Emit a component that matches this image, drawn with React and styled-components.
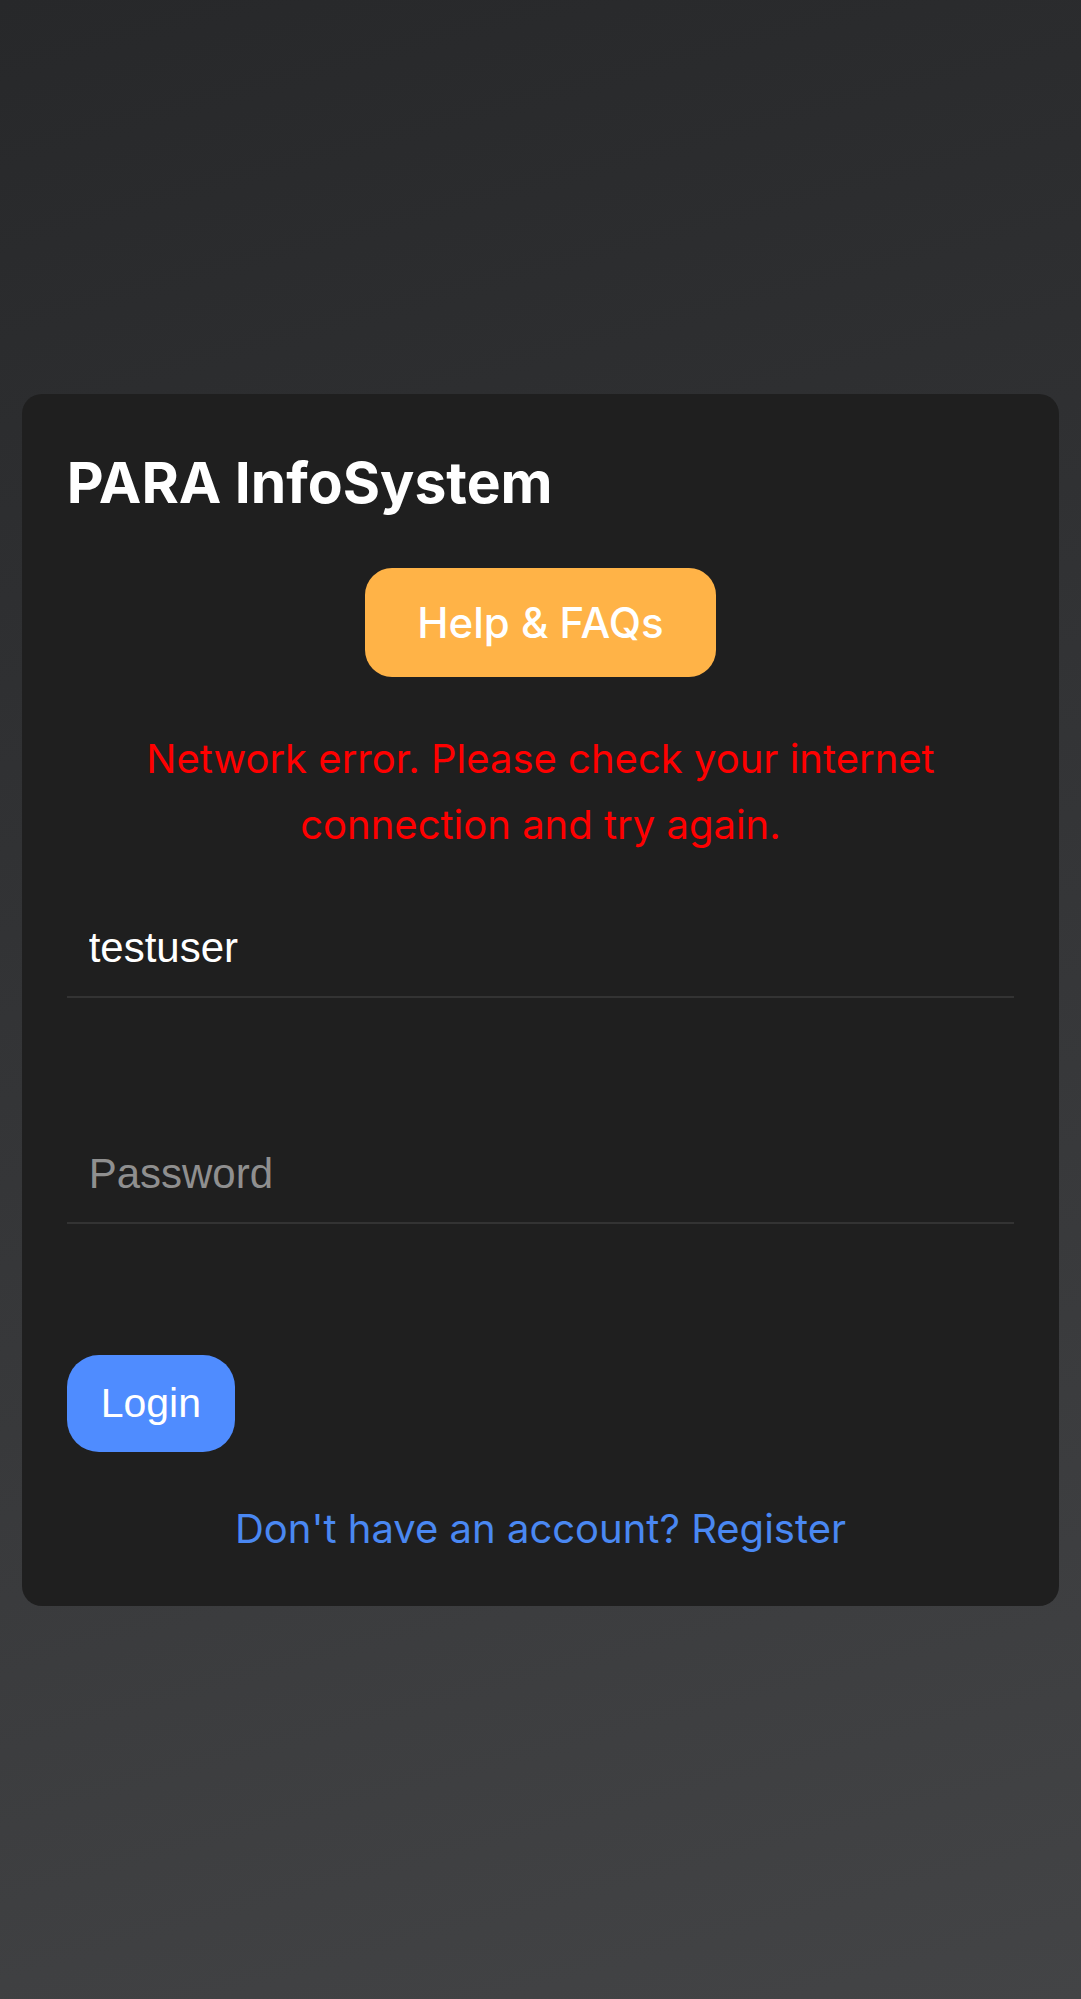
import React, { useState } from "react";
import styled, { createGlobalStyle } from "styled-components";

const GlobalStyle = createGlobalStyle`
  html, body {
    margin: 0;
    padding: 0;
  }
  body {
    min-height: 100vh;
    background: linear-gradient(165deg, #27282a 0%, #2f3032 30%, #3a3b3d 70%, #434446 100%);
    font-family: "Inter", "Liberation Sans", sans-serif;
  }
  * {
    box-sizing: border-box;
  }
`;

const Page = styled.div`
  min-height: 100vh;
  display: flex;
  align-items: center;
  justify-content: center;
`;

const Card = styled.div`
  width: 96%;
  background-color: #1f1f1f;
  border-radius: 20px;
  padding: 54px 45px 53px;
  display: flex;
  flex-direction: column;
`;

const Title = styled.h1`
  margin: 0;
  font-family: "Inter", sans-serif;
  font-weight: 700;
  font-size: 57px;
  line-height: 69px;
  color: #ffffff;
`;

const HelpButton = styled.button`
  align-self: center;
  margin-top: 51px;
  padding: 28px 52px;
  border: none;
  border-radius: 27px;
  background-color: #ffb347;
  color: #ffffff;
  font-family: "Inter", sans-serif;
  font-weight: 500;
  font-size: 42px;
  line-height: 53px;
  cursor: pointer;
`;

const ErrorText = styled.p`
  margin: 49px 0 0;
  font-family: "Inter", sans-serif;
  font-size: 40px;
  line-height: 66px;
  color: #ff0000;
  text-align: center;
`;

const Form = styled.form`
  display: flex;
  flex-direction: column;
  margin-top: 42px;
`;

const Field = styled.div`
  margin-bottom: ${(p) => p.$gap}px;
`;

const TextInput = styled.input`
  display: block;
  width: 100%;
  padding: 24px 22px;
  border: none;
  border-bottom: 2px solid #333333;
  background: transparent;
  color: #ffffff;
  font-family: "Liberation Sans", Arial, sans-serif;
  font-size: 42px;
  outline: none;

  &::placeholder {
    color: #8f8f8f;
  }
`;

const LoginButton = styled.button`
  align-self: flex-start;
  padding: 25px 34px;
  border: none;
  border-radius: 32px;
  background-color: #4f8cff;
  color: #ffffff;
  font-family: "Liberation Sans", Arial, sans-serif;
  font-size: 41px;
  cursor: pointer;
`;

const RegisterLink = styled.a`
  margin-top: 53px;
  font-family: "Inter", sans-serif;
  font-size: 40px;
  line-height: 48px;
  color: #4a88f2;
  text-align: center;
  text-decoration: none;
`;

export default function App() {
  const [username, setUsername] = useState("testuser");
  const [password, setPassword] = useState("");

  return (
    <>
      <GlobalStyle />
      <Page>
        <Card>
          <Title>PARA InfoSystem</Title>
          <HelpButton type="button">Help &amp; FAQs</HelpButton>
          <ErrorText>
            Network error. Please check your internet connection and try again.
          </ErrorText>
          <Form onSubmit={(e) => e.preventDefault()}>
            <Field $gap={128}>
              <TextInput
                type="text"
                placeholder="Username"
                value={username}
                onChange={(e) => setUsername(e.target.value)}
              />
            </Field>
            <Field $gap={131}>
              <TextInput
                type="password"
                placeholder="Password"
                value={password}
                onChange={(e) => setPassword(e.target.value)}
              />
            </Field>
            <LoginButton type="submit">Login</LoginButton>
          </Form>
          <RegisterLink href="#">Don't have an account? Register</RegisterLink>
        </Card>
      </Page>
    </>
  );
}
